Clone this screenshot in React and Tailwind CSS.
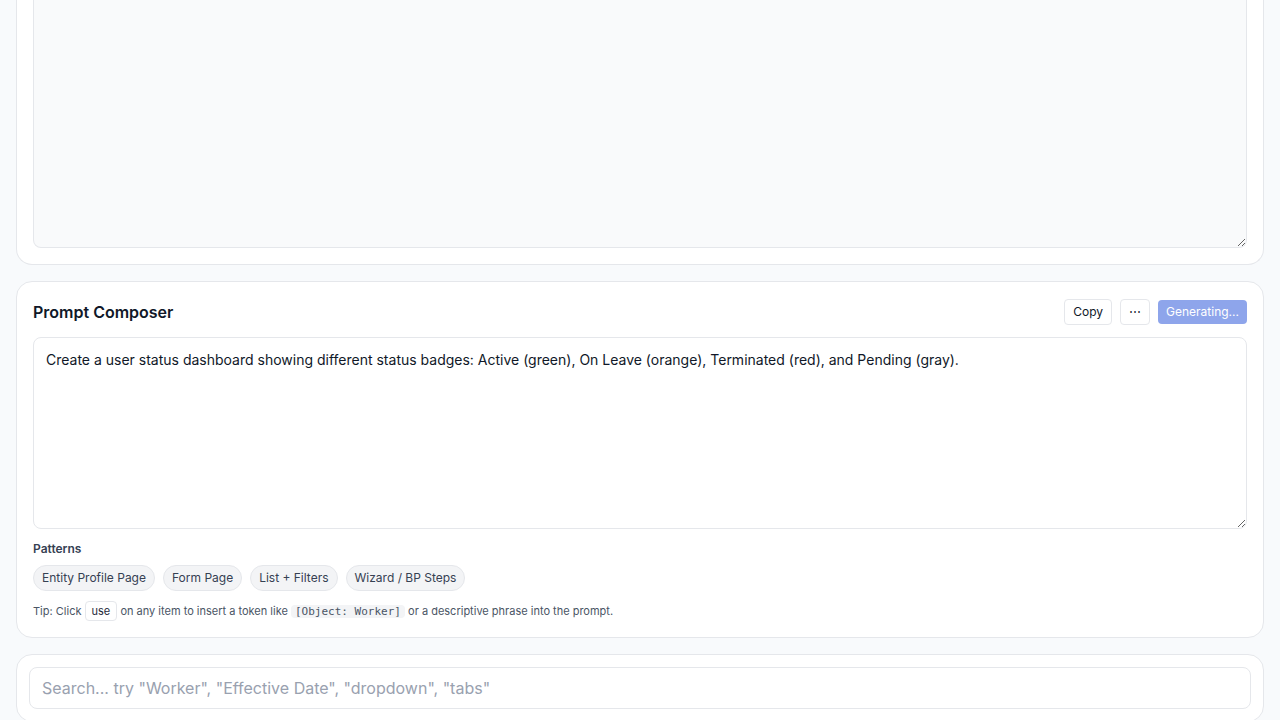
const patterns = ["Entity Profile Page", "Form Page", "List + Filters", "Wizard / BP Steps"];

export default function App() {
  return (
    <div className="h-screen overflow-hidden bg-[#f8fafc] font-['Inter',sans-serif] text-gray-900">
      <main className="flex flex-col gap-4 px-4">
        <section className="rounded-b-2xl border-x border-b border-gray-200 bg-white px-4 pb-4">
          <textarea
            aria-label="Output"
            readOnly
            className="block h-62 w-full resize-y rounded-b-lg border-x border-b border-gray-200 bg-gray-50 p-3 text-sm outline-none"
          />
        </section>

        <section className="rounded-2xl border border-gray-200 bg-white p-4">
          <div className="mb-3 flex min-h-[27px] items-center justify-between">
            <h2 className="text-base font-semibold">Prompt Composer</h2>
            <div className="flex items-center gap-2">
              <button className="rounded border border-gray-200 bg-white px-2 py-1 text-xs">Copy</button>
              <button aria-label="More" className="rounded border border-gray-200 bg-white px-2 py-1 text-xs">⋯</button>
              <button disabled className="rounded bg-[#8ea5eb] px-2 py-1 text-xs text-white">Generating...</button>
            </div>
          </div>
          <textarea
            aria-label="Prompt"
            defaultValue="Create a user status dashboard showing different status badges: Active (green), On Leave (orange), Terminated (red), and Pending (gray)."
            className="block h-48 w-full resize-y rounded-lg border border-gray-200 bg-white p-3 text-sm outline-none"
          />
          <h3 className="mt-3 mb-2 text-xs font-semibold text-gray-700">Patterns</h3>
          <div className="flex flex-wrap gap-2">
            {patterns.map((name) => (
              <button key={name} className="rounded-full border border-gray-200 bg-gray-100 px-2 py-1 text-xs text-gray-700">
                {name}
              </button>
            ))}
          </div>
          <p className="mt-3 text-[11px] text-gray-600">
            Tip: Click <span className="rounded border border-gray-200 bg-white px-1.5 py-0.5 text-gray-800">use</span> on any item to insert a token like{" "}
            <code className="rounded bg-gray-100 px-1 font-['DejaVu_Sans_Mono',monospace]">[Object: Worker]</code> or a descriptive phrase into the prompt.
          </p>
        </section>

        <section className="rounded-2xl border border-gray-200 bg-white p-3">
          <input
            type="search"
            aria-label="Search"
            placeholder={'Search... try "Worker", "Effective Date", "dropdown", "tabs"'}
            className="block w-full rounded-lg border border-gray-200 px-3 py-2 text-base outline-none placeholder:text-gray-400"
          />
        </section>
      </main>
    </div>
  );
}
